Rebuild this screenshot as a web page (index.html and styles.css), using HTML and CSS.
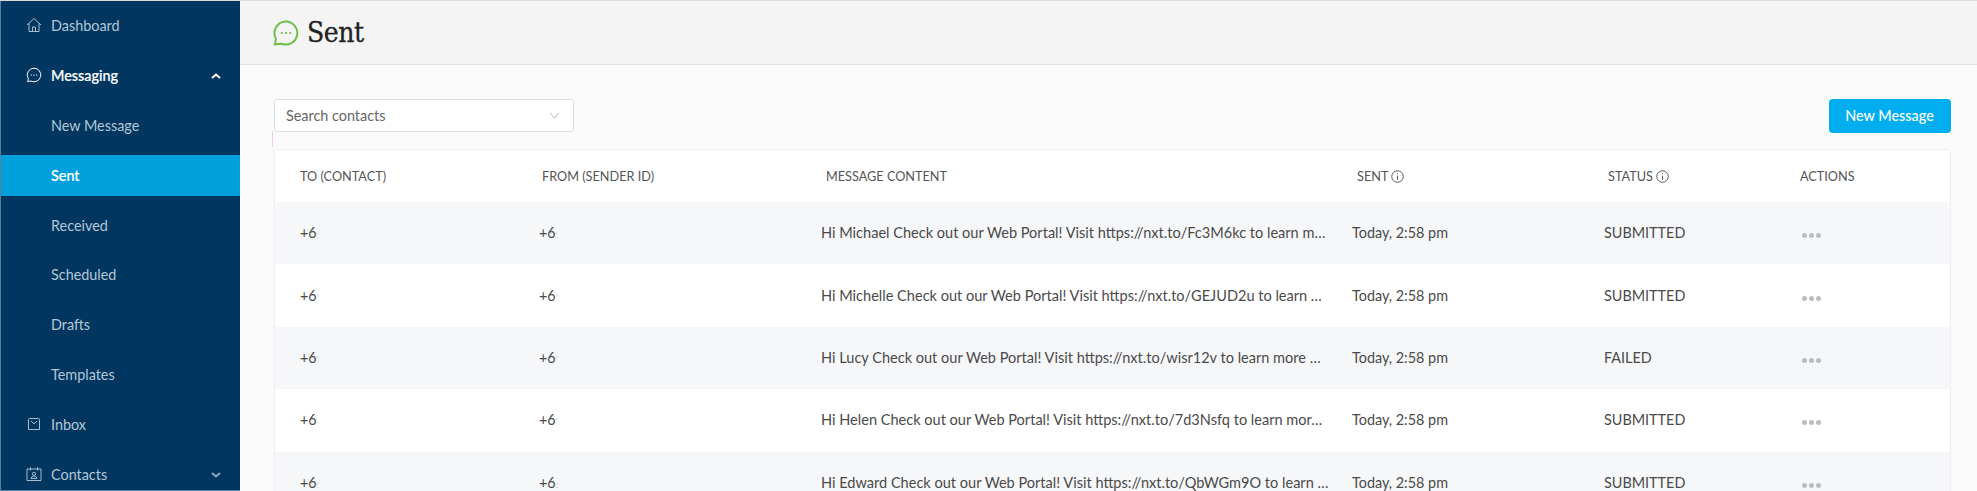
FILE: index.html
```html
<!DOCTYPE html>
<html lang="en">
<head>
<meta charset="utf-8">
<title>Sent</title>
<link rel="stylesheet" href="styles.css">
</head>
<body>
<div class="app">
  <nav class="sidebar">
    <a class="nav-item">
      <svg class="nav-icon" viewBox="0 0 16 16"><path d="M1 8 8 1.5 15 8M3 6.5V14.5H13V6.5M6.5 14.5V10H9.5V14.5"/></svg>
      <span>Dashboard</span>
    </a>
    <a class="nav-item is-open">
      <svg class="nav-icon" viewBox="0 0 16 16"><path d="M8 1.2A6.8 6.8 0 1 1 5 14.1L1.6 14.6 2.4 11.8A6.8 6.8 0 0 1 8 1.2Z"/><path class="dots" d="M5.2 8h.3M7.85 8h.3M10.5 8h.3"/></svg>
      <span class="nav-label">Messaging</span>
      <svg class="caret caret-open" viewBox="0 0 10 6"><path d="M1 5 5 1.5 9 5"/></svg>
    </a>
    <a class="nav-item">New Message</a>
    <a class="nav-item is-active">Sent</a>
    <a class="nav-item">Received</a>
    <a class="nav-item">Scheduled</a>
    <a class="nav-item">Drafts</a>
    <a class="nav-item">Templates</a>
    <a class="nav-item">
      <svg class="nav-icon nav-icon-sm" viewBox="0 0 12 12"><path d="M1.5.5H10.5Q11.5.5 11.5 1.5V11.5H.5V1.5Q.5.5 1.5.5ZM3 3 6 5.8 9 3"/></svg>
      <span>Inbox</span>
    </a>
    <a class="nav-item">
      <svg class="nav-icon" viewBox="0 0 16 16"><path d="M1 3H15V14.5H1ZM4.5 1.2V4.5M11.5 1.2V4.5M5 12.5Q5.3 10 8 10T11 12.5ZM8 6.2A1.6 1.6 0 1 0 8 9.4 1.6 1.6 0 0 0 8 6.2Z"/></svg>
      <span class="nav-label">Contacts</span>
      <svg class="caret" viewBox="0 0 10 6"><path d="M1 1 5 4.5 9 1"/></svg>
    </a>
  </nav>
  <main class="main">
    <header class="page-header">
      <svg class="title-icon" viewBox="0 0 26 26"><path d="M13 1.5A11.5 11.5 0 1 1 8.6 23.7L2 24.3 2.9 18.6A11.5 11.5 0 0 1 13 1.5Z"/><path class="dots" d="M8.6 13h.3M12.85 13h.3M17.1 13h.3"/></svg>
      <h1 class="page-title">Sent</h1>
    </header>
    <section class="content">
      <div class="toolbar">
        <div class="search">
          <span>Search contacts</span>
          <svg class="search-caret" viewBox="0 0 12 8"><path d="M1 1 6 7 11 1"/></svg>
        </div>
        <button class="btn-primary">New Message</button>
      </div>
      <div class="table">
        <div class="row row-head">
          <div class="cell">TO (CONTACT)</div>
          <div class="cell">FROM (SENDER ID)</div>
          <div class="cell">MESSAGE CONTENT</div>
          <div class="cell">SENT <svg class="info" viewBox="0 0 12 12"><circle cx="6" cy="6" r="5.3"/><path d="M6 5.2V9M6 3v.9"/></svg></div>
          <div class="cell">STATUS <svg class="info" viewBox="0 0 12 12"><circle cx="6" cy="6" r="5.3"/><path d="M6 5.2V9M6 3v.9"/></svg></div>
          <div class="cell">ACTIONS</div>
        </div>
        <div class="row">
          <div class="cell">+6<i class="mask">:</i></div>
          <div class="cell">+6<i class="mask">:</i></div>
          <div class="cell msg">Hi Michael Check out our Web Portal! Visit https://nxt.to/Fc3M6kc to learn m…</div>
          <div class="cell">Today, 2:58 pm</div>
          <div class="cell">SUBMITTED</div>
          <div class="cell"><span class="more"><b></b><b></b><b></b></span></div>
        </div>
        <div class="row">
          <div class="cell">+6<i class="mask">'</i></div>
          <div class="cell">+6<i class="mask">'</i></div>
          <div class="cell msg">Hi Michelle Check out our Web Portal! Visit https://nxt.to/GEJUD2u to learn …</div>
          <div class="cell">Today, 2:58 pm</div>
          <div class="cell">SUBMITTED</div>
          <div class="cell"><span class="more"><b></b><b></b><b></b></span></div>
        </div>
        <div class="row">
          <div class="cell">+6<i class="mask">'</i></div>
          <div class="cell">+6<i class="mask">'</i></div>
          <div class="cell msg">Hi Lucy Check out our Web Portal! Visit https://nxt.to/wisr12v to learn more …</div>
          <div class="cell">Today, 2:58 pm</div>
          <div class="cell">FAILED</div>
          <div class="cell"><span class="more"><b></b><b></b><b></b></span></div>
        </div>
        <div class="row">
          <div class="cell">+6</div>
          <div class="cell">+6<i class="mask">'</i></div>
          <div class="cell msg">Hi Helen Check out our Web Portal! Visit https://nxt.to/7d3Nsfq to learn mor…</div>
          <div class="cell">Today, 2:58 pm</div>
          <div class="cell">SUBMITTED</div>
          <div class="cell"><span class="more"><b></b><b></b><b></b></span></div>
        </div>
        <div class="row">
          <div class="cell">+6<i class="mask">:</i></div>
          <div class="cell">+6<i class="mask">:</i></div>
          <div class="cell msg">Hi Edward Check out our Web Portal! Visit https://nxt.to/QbWGm9O to learn …</div>
          <div class="cell">Today, 2:58 pm</div>
          <div class="cell">SUBMITTED</div>
          <div class="cell"><span class="more"><b></b><b></b><b></b></span></div>
        </div>
      </div>
    </section>
  </main>
</div>
</body>
</html>
```
FILE: styles.css
```css
* { box-sizing: border-box; }
html, body { margin: 0; height: 100%; overflow: hidden; }
body { font-family: Lato, "Open Sans", sans-serif; font-size: 14.4px; color: #4a4a4a; background: #fafafb; }
.app { display: flex; height: 491px; overflow: hidden; border-top: 1px solid #dcdcdc; }

.sidebar { flex: 0 0 240px; height: 490px; display: flex; flex-direction: column; gap: 8.8px; padding-top: 4.4px; overflow: hidden; background: #003660; border-left: 1px solid #5b7d98; border-bottom: 1px solid #5b7d98; }
.nav-item { flex: 0 0 41px; display: flex; align-items: center; padding-left: 50px; position: relative; color: #b4c6d6; }
.nav-label { flex: 1; }
.nav-item.is-open { color: #fff; font-weight: 500; -webkit-text-stroke: .2px #fff; }
.nav-item.is-active { margin-left: -1px; padding-left: 51px; background: #00a0dc; color: #fff; font-weight: 500; -webkit-text-stroke: .2px #fff; }
.nav-icon { position: absolute; left: 25px; top: 12px; width: 16px; height: 16px; fill: none; stroke: #a9bdcf; stroke-width: 1; }
.nav-icon-sm { left: 26.5px; top: 14px; width: 12px; height: 12px; }
.is-open .nav-icon { stroke: #fff; }
.nav-icon .dots { stroke-width: 1.2; stroke-linecap: round; }
.caret { position: absolute; right: 19px; top: 18px; width: 10px; height: 6px; fill: none; stroke: #8fa8bd; stroke-width: 2; }
.caret-open { stroke: #fff; }

.main { flex: 1; min-width: 0; display: flex; flex-direction: column; }
.page-header { flex: 0 0 64px; display: flex; align-items: center; gap: 8px; padding: 0 0 0 33px; background: #f4f4f4; border-bottom: 1px solid #e2e2e2; }
.title-icon { width: 26px; height: 26px; fill: none; stroke: #6cc04a; stroke-width: 2; }
.title-icon .dots { stroke-width: 1.8; stroke-linecap: round; }
.page-title { margin: 0; font-family: "DejaVu Serif Condensed", "DejaVu Serif", serif; font-weight: 400; font-size: 28px; color: #222; letter-spacing: -0.5px; -webkit-text-stroke: .3px #222; }

.content { flex: 1; padding: 34px 26px 0 34px; }
.toolbar { display: flex; justify-content: space-between; align-items: center; height: 33px; }
.search { width: 300px; height: 33px; display: flex; align-items: center; justify-content: space-between; padding: 0 13px 0 11px; background: #fff; border: 1px solid #dcdfe3; border-radius: 3px; color: #666; position: relative; }
.search::after { content: ""; position: absolute; left: -3px; top: 31px; width: 1px; height: 16px; background: #f2d3c9; }
.search-caret { width: 11px; height: 7px; fill: none; stroke: #a8adb3; stroke-width: 1; }
.btn-primary { width: 122px; height: 34px; border: 0; border-radius: 4px; background: #00aeef; color: #fff; font: 500 14.4px Lato, sans-serif; padding: 0 1px 0 0; }

.table { margin-top: 17px; background: #fff; border: 1px solid #eceef1; border-bottom: 0; border-radius: 3px 3px 0 0; }
.row { display: grid; grid-template-columns: 264px 282px 531px 252px 196px 1fr; align-items: center; height: 62.4px; padding-bottom: 1px; background: #fff; }
.row:nth-child(even) { background: #f6f7f9; }
.row-head { height: 52px; font-size: 12.7px; color: #555; }
.row-head .cell { padding-left: 4px; }
.row-head .cell:first-child { padding-left: 25px; }
.row-head .cell:nth-child(2) { padding-left: 3px; }
.row-head .cell:nth-child(3) { padding-left: 5px; }
.row-head .cell:nth-child(4) { padding-left: 5px; }
.row-head .cell:nth-child(6) { padding-left: 0; }
.cell:first-child { padding-left: 25px; }
.cell { white-space: nowrap; }
.msg { font-size: 14.55px; }
.mask { font-style: normal; color: #c8c8c8; font-size: 10px; }
.info { width: 13px; height: 13px; vertical-align: -2.5px; fill: none; stroke: #555; stroke-width: .9; }
.more { display: inline-flex; gap: 2px; margin-left: 2px; }
.more b { width: 5px; height: 5px; border-radius: 50%; background: #b9bcc0; }
```
